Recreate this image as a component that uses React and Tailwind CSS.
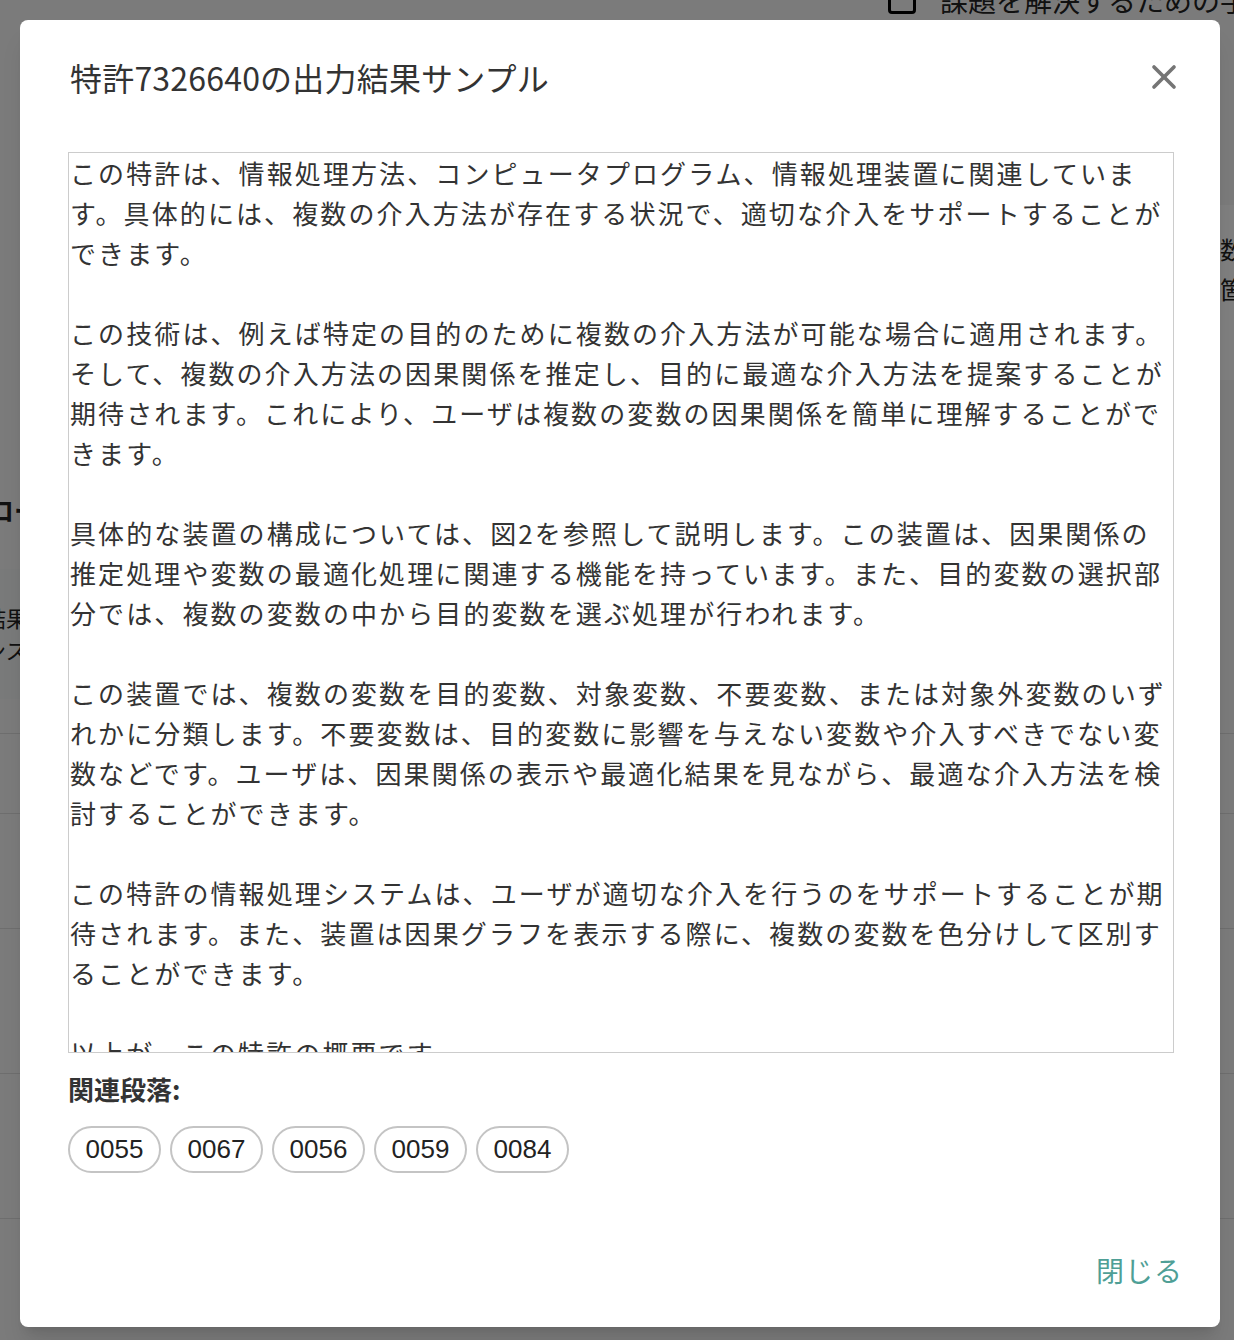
import { X } from "lucide-react";

const paragraphs = [
  "この特許は、情報処理方法、コンピュータプログラム、情報処理装置に関連しています。具体的には、複数の介入方法が存在する状況で、適切な介入をサポートすることができます。",
  "この技術は、例えば特定の目的のために複数の介入方法が可能な場合に適用されます。そして、複数の介入方法の因果関係を推定し、目的に最適な介入方法を提案することが期待されます。これにより、ユーザは複数の変数の因果関係を簡単に理解することができます。",
  "具体的な装置の構成については、図2を参照して説明します。この装置は、因果関係の推定処理や変数の最適化処理に関連する機能を持っています。また、目的変数の選択部分では、複数の変数の中から目的変数を選ぶ処理が行われます。",
  "この装置では、複数の変数を目的変数、対象変数、不要変数、または対象外変数のいずれかに分類します。不要変数は、目的変数に影響を与えない変数や介入すべきでない変数などです。ユーザは、因果関係の表示や最適化結果を見ながら、最適な介入方法を検討することができます。",
  "この特許の情報処理システムは、ユーザが適切な介入を行うのをサポートすることが期待されます。また、装置は因果グラフを表示する際に、複数の変数を色分けして区別することができます。",
  "以上が、この特許の概要です。",
];

const paras = ["0055", "0067", "0056", "0059", "0084"];

const jp = { fontFamily: '"Noto Sans CJK JP", "Noto Sans", sans-serif' };

// page sitting behind the overlay, only edges show
const BackgroundPage = () => (
  <div className="absolute inset-0 bg-[#f7f7f7] text-[#222]" style={jp}>
    <div className="flex items-center gap-6 ml-[888px] -mt-5 h-10 whitespace-nowrap">
      <div className="w-7 h-7 shrink-0 border-[3px] border-black rounded-sm" />
      <span className="text-[28px]">課題を解決するための手段</span>
    </div>
    <div className="mt-[185px] ml-[1220px] h-[175px] bg-white text-[24px] leading-[40px] pt-6">
      <div>数</div>
      <div>箇</div>
    </div>
    <div className="mt-[110px] text-[26px] font-bold -ml-3">ロー</div>
    <div className="mt-[40px] h-[130px] w-[60px] bg-[#f2f5f4] text-[22px] leading-[32px] pt-8 -ml-4">
      <div>結果</div>
      <div>ンス</div>
    </div>
    <div className="border-b border-[#ddd] h-[35px]" />
    <div className="border-b border-[#ddd] h-[80px]" />
    <div className="border-b border-[#ddd] h-[115px]" />
    <div className="border-b border-[#ddd] h-[145px]" />
    <div className="border-b border-[#ddd] h-[145px]" />
    <div className="ml-[765px] mt-[75px] w-[190px] h-[16px] border border-t-0 border-[#bbb] rounded-b-md" />
  </div>
);

const App = () => {
  return (
    <div className="relative w-full h-[1340px] overflow-hidden">
      <BackgroundPage />
      <div className="absolute inset-0 bg-black/50 pt-5 pl-5">
        <div className="w-[1200px] h-[1307px] bg-white rounded-lg shadow-xl flex flex-col" style={jp}>
          <div className="flex items-center justify-between pl-[50px] pr-[36px] pt-[37px] pb-[55px]">
            <h2 className="text-[32px] leading-[40px] text-[#333] tracking-[0.2px]">
              特許7326640の出力結果サンプル
            </h2>
            <button type="button" className="text-[#757575]">
              <X size={40} strokeWidth={2.2} />
            </button>
          </div>
          <div className="pl-12 pr-[46px]">
            <div className="h-[901px] border border-[#ccc] overflow-hidden pl-[1px] text-[26px] leading-[40px] tracking-[2.1px] text-[#333] whitespace-pre-wrap">
              {paragraphs.join("\n\n")}
            </div>
            <div className="mt-[18px] text-[26px] font-bold text-[#333] leading-[36px]">関連段落:</div>
            <div className="flex gap-[9px] mt-[19px]">
              {paras.map((p) => (
                <span
                  key={p}
                  className="h-[47px] w-[93px] flex items-center justify-center rounded-full border-2 border-[#c4c4c4] text-[26px] text-[#222]"
                  style={{ fontFamily: '"Liberation Sans", Arial, sans-serif' }}
                >
                  {p}
                </span>
              ))}
            </div>
          </div>
          <div className="mt-auto flex justify-end pr-[37px] pb-[36px]">
            <button type="button" className="text-[28px] text-[#4f9f96] tracking-[1px]">
              閉じる
            </button>
          </div>
        </div>
      </div>
    </div>
  );
};

export default App;
